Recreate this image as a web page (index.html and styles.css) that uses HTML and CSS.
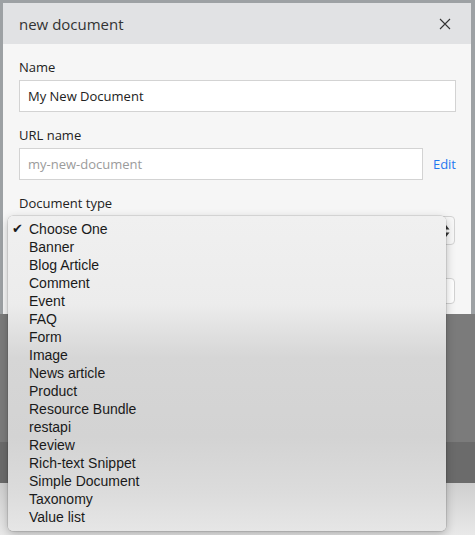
FILE: index.html
```html
<!DOCTYPE html>
<html>
<head>
<meta charset="utf-8">
<link rel="stylesheet" href="styles.css">
</head>
<body>
<div class="page">
  <div class="dialog">
    <div class="dialog-header">
      <span class="dialog-title">new document</span>
      <svg class="close" width="12" height="12" viewBox="0 0 12 12"><path d="M1 1L11 11M11 1L1 11" stroke="#333" stroke-width="1.1" fill="none"/></svg>
    </div>
    <div class="dialog-body">
      <div class="field">
        <label class="label">Name</label>
        <div class="input">My New Document</div>
      </div>
      <div class="field">
        <label class="label">URL name</label>
        <div class="row">
          <div class="input input-url placeholder">my-new-document</div>
          <a class="edit">Edit</a>
        </div>
      </div>
      <div class="field">
        <label class="label">Document type</label>
        <div class="select">
          <svg class="arrows" width="8" height="14" viewBox="0 0 8 14"><path d="M4 1L7.5 5.5H0.5Z M4 13L7.5 8.5H0.5Z" fill="#333"/></svg>
        </div>
      </div>
      <div class="field field-last">
        <div class="input input-small"></div>
      </div>
    </div>
  </div>
  <div class="backdrop">
    <div class="band band1"></div>
    <div class="band band2"></div>
    <div class="band band3"></div>
  </div>

  <ul class="menu">
    <li class="checked">Choose One</li>
    <li>Banner</li>
    <li>Blog Article</li>
    <li>Comment</li>
    <li>Event</li>
    <li>FAQ</li>
    <li>Form</li>
    <li>Image</li>
    <li>News article</li>
    <li>Product</li>
    <li>Resource Bundle</li>
    <li>restapi</li>
    <li>Review</li>
    <li>Rich-text Snippet</li>
    <li>Simple Document</li>
    <li>Taxonomy</li>
    <li>Value list</li>
  </ul>
</div>
</body>
</html>
```

FILE: styles.css
```css
* { box-sizing: border-box; }
html, body { margin: 0; padding: 0; }
body {
  width: 475px;
  height: 535px;
  overflow: hidden;
  background: #9da1a4;
  font-family: "Open Sans", "Noto Sans", sans-serif;
  color: #333;
}
.page {
  position: relative;
  width: 475px;
  height: 535px;
  padding-top: 3px;
}
.dialog {
  margin: 0 4px 0 3px;
  background: #f6f6f6;
  height: 311px;
}
.dialog-header {
  height: 41px;
  background: #e1e2e4;
  display: flex;
  align-items: center;
  justify-content: space-between;
  padding: 0 20px 0 16px;
}
.dialog-title {
  font-size: 15px;
  color: #333;
}
.close { display: block; }
.dialog-body {
  padding: 13px 15px 0 16px;
}
.field { margin-bottom: 13px; }
.label {
  display: block;
  font-size: 13px;
  line-height: 20px;
  color: #222;
  margin-bottom: 3px;
}
.input {
  height: 32px;
  background: #fff;
  border: 1px solid #d3d3d3;
  font-size: 13px;
  line-height: 30px;
  padding-left: 8px;
  color: #222;
}
.row {
  display: flex;
  align-items: center;
}
.input-url { width: 405px; }
.placeholder { color: #9b9b9b; }
.edit {
  margin-left: 10px;
  font-size: 13px;
  color: #1f78f0;
}
.select {
  height: 29px;
  border: 1px solid #d3d3d3;
  border-radius: 4px;
  background: #f8f8f8;
  margin-right: 1px;
  position: relative;
}
.arrows {
  position: absolute;
  right: 4px;
  top: 7px;
}
.field-last { margin-top: 33px; }
.input-small {
  height: 26px;
  border-radius: 4px;
  margin-right: 1px;
}
.band1 { height: 128px; background: #7b7b7b; }
.band2 { height: 41px; background: #6b6b6b; }
.band3 { height: 52px; background: linear-gradient(#cfcfcf, #e9e9e9); }

.menu {
  position: absolute;
  left: 8px;
  top: 216px;
  width: 438px;
  height: 315px;
  margin: 0;
  padding: 4px 0 5px 0;
  list-style: none;
  border-radius: 5px;
  background: linear-gradient(#f0f0f0 0%, #ececec 28%, #d6d6d6 45%, #d3d3d3 70%, #dcdcdc 88%, #e6e6e6 100%);
  box-shadow: 0 0 0 0.5px rgba(0,0,0,0.18), 0 3px 10px rgba(0,0,0,0.25);
  font-family: "Liberation Sans", Arial, sans-serif;
  font-size: 14px;
  color: #1a1a1a;
}
.menu li {
  height: 18px;
  line-height: 18px;
  padding-left: 21px;
  position: relative;
}
.menu li.checked::before {
  content: "\2714";
  position: absolute;
  left: 4px;
  top: 0;
  font-family: "DejaVu Sans", sans-serif;
  font-size: 13px;
}
```
